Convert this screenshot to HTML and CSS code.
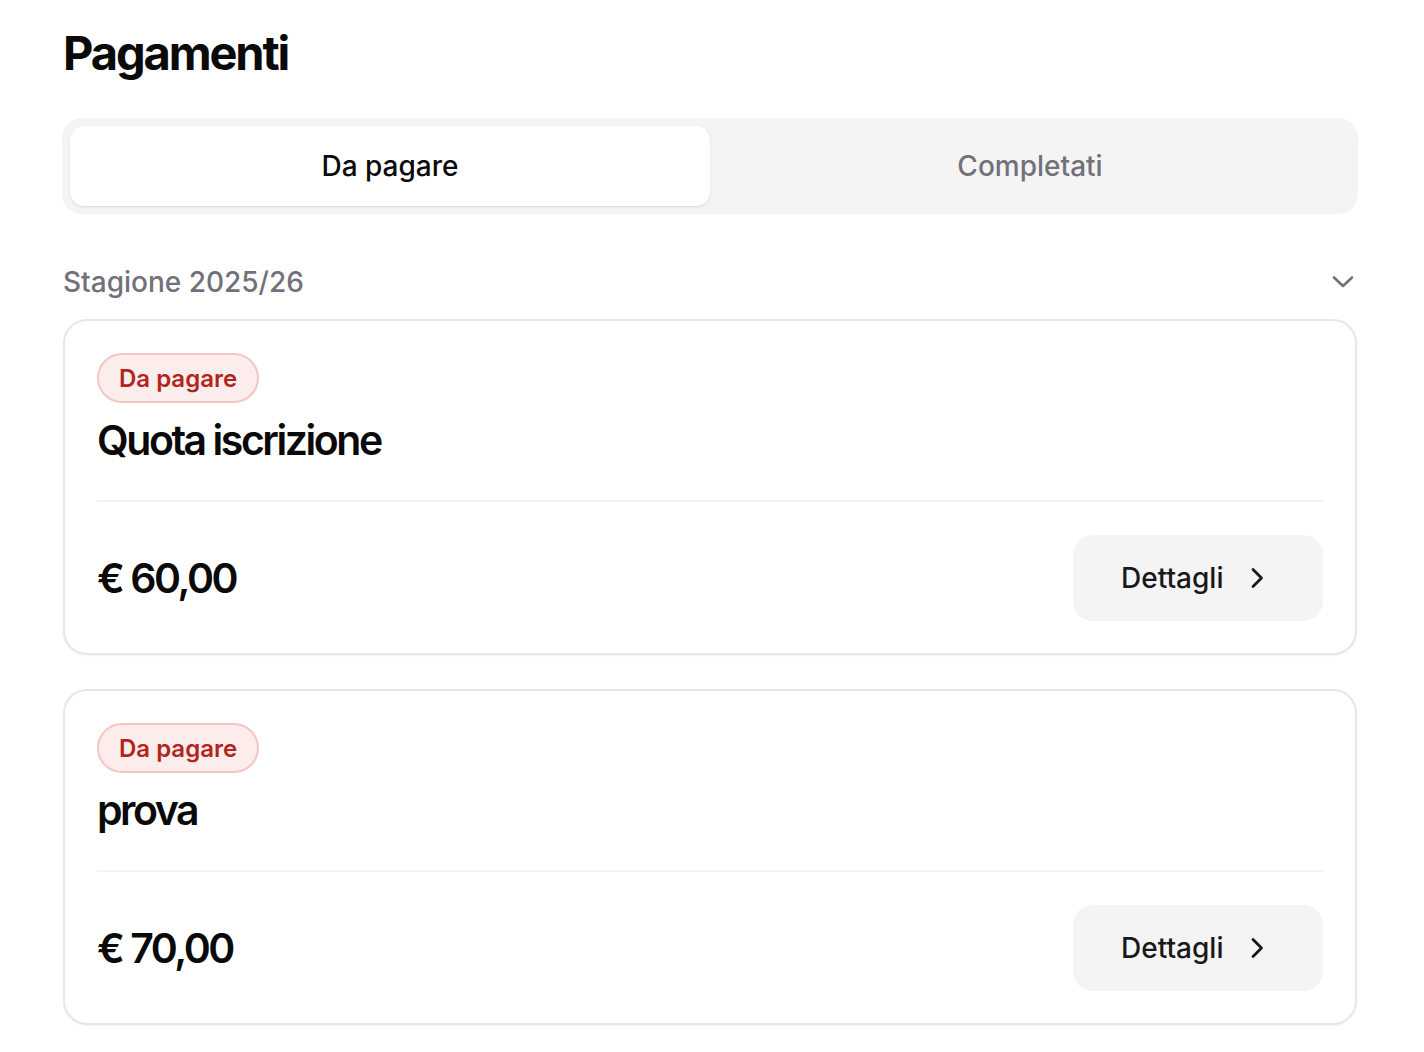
FILE: index.html
```html
<!DOCTYPE html>
<html lang="it">
<head>
<meta charset="utf-8">
<title>Pagamenti</title>
<link rel="stylesheet" href="styles.css">
</head>
<body>
<main class="page">
  <h1 class="page-title">Pagamenti</h1>

  <div class="tabs">
    <button class="tab tab-active">Da pagare</button>
    <button class="tab">Completati</button>
  </div>

  <div class="season">
    <span class="season-label">Stagione 2025/26</span>
    <svg class="season-chevron" width="24" height="16" viewBox="0 0 24 16" fill="none" stroke="currentColor" stroke-width="2.6" stroke-linecap="round" stroke-linejoin="round"><path d="M3 3.5 L12 12 L21 3.5"/></svg>
  </div>

  <div class="list">
    <article class="card">
      <div class="card-head">
        <span class="badge">Da pagare</span>
        <h2 class="card-title">Quota iscrizione</h2>
      </div>
      <div class="card-foot">
        <span class="amount">€ 60,00</span>
        <button class="details">
          <span>Dettagli</span>
          <svg width="18" height="24" viewBox="0 0 18 24" fill="none" stroke="currentColor" stroke-width="2.8" stroke-linecap="round" stroke-linejoin="round"><path d="M5 3.5 L13.5 12 L5 20.5"/></svg>
        </button>
      </div>
    </article>

    <article class="card">
      <div class="card-head">
        <span class="badge">Da pagare</span>
        <h2 class="card-title">prova</h2>
      </div>
      <div class="card-foot">
        <span class="amount">€ 70,00</span>
        <button class="details">
          <span>Dettagli</span>
          <svg width="18" height="24" viewBox="0 0 18 24" fill="none" stroke="currentColor" stroke-width="2.8" stroke-linecap="round" stroke-linejoin="round"><path d="M5 3.5 L13.5 12 L5 20.5"/></svg>
        </button>
      </div>
    </article>
  </div>
</main>
</body>
</html>
```

FILE: styles.css
```css
* { box-sizing: border-box; }

html, body {
  margin: 0;
  background: #ffffff;
}

body {
  font-family: Inter, "Noto Sans", "Liberation Sans", sans-serif;
  color: #0a0a0a;
}

.page {
  padding: 24px 66px 40px 62px;
}

.page-title {
  margin: 0;
  font-size: 47px;
  line-height: 58px;
  font-weight: 700;
  letter-spacing: -0.045em;
  padding-left: 1px;
}

.tabs {
  margin-top: 36px;
  display: grid;
  grid-template-columns: 1fr 1fr;
  padding: 8px;
  background: #f4f4f5;
  border-radius: 20px;
  height: 96px;
}

.tab {
  border: 0;
  background: transparent;
  font-family: inherit;
  font-size: 28px;
  font-weight: 500;
  color: #71717a;
  border-radius: 14px;
  height: 80px;
  padding: 0;
}

.tab-active {
  background: #ffffff;
  color: #0a0a0a;
  box-shadow: 0 1px 3px rgba(0, 0, 0, 0.08), 0 1px 2px rgba(0, 0, 0, 0.04);
}

.season {
  margin-top: 51px;
  display: flex;
  align-items: center;
  justify-content: space-between;
  padding-left: 1px;
}

.season-label {
  font-size: 28px;
  line-height: 34px;
  font-weight: 500;
  color: #71717a;
}

.season-chevron {
  color: #71717a;
  margin-right: 3px;
}

.list {
  margin-top: 20px;
  display: flex;
  flex-direction: column;
  gap: 34px;
}

.card {
  border: 2px solid #e7e7e9;
  border-radius: 24px;
  padding: 32px;
  background: #ffffff;
  box-shadow: 0 1px 2px rgba(0, 0, 0, 0.05);
  margin: 0 1px;
}

.card-head {
  display: flex;
  flex-direction: column;
  align-items: flex-start;
  padding-bottom: 35px;
  border-bottom: 2px solid #f2f2f3;
}

.badge {
  display: inline-flex;
  align-items: center;
  height: 50px;
  padding: 0 20px;
  border-radius: 999px;
  background: #fdecec;
  border: 2px solid #f5c5c3;
  color: #b0261c;
  font-size: 24px;
  font-weight: 600;
}

.card-title {
  margin: 12px 0 0;
  font-size: 41px;
  line-height: 50px;
  font-weight: 600;
  letter-spacing: -0.06em;
}

.card-foot {
  padding-top: 33px;
  display: flex;
  align-items: center;
  justify-content: space-between;
}

.amount {
  font-size: 41px;
  line-height: 50px;
  font-weight: 600;
  letter-spacing: -0.06em;
}

.details {
  display: inline-flex;
  align-items: center;
  gap: 25px;
  height: 86px;
  width: 250px;
  padding: 0 0 0 48px;
  border: 0;
  border-radius: 20px;
  background: #f4f4f5;
  font-family: inherit;
  font-size: 28px;
  font-weight: 500;
  color: #18181b;
}
```
